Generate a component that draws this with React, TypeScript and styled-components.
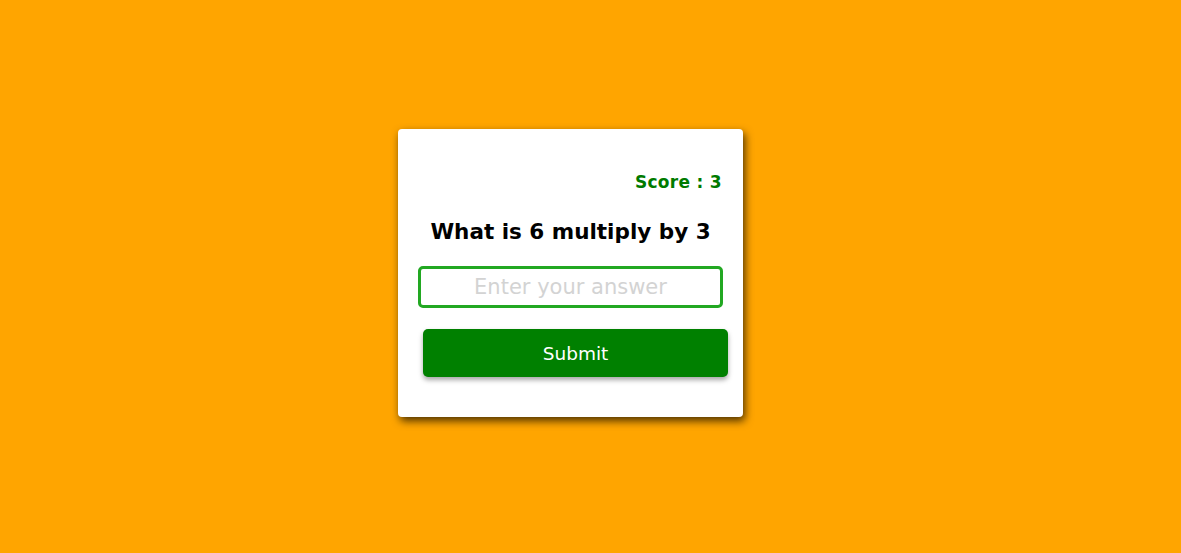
import styled, { createGlobalStyle } from "styled-components";

const GlobalStyle = createGlobalStyle`
  html, body {
    margin: 0;
    padding: 0;
    background: #ffa500;
  }

  * {
    box-sizing: border-box;
  }
`;

const Page = styled.div`
  height: 100vh;
  display: flex;
  align-items: center;
  justify-content: center;
  padding-right: 40px;
  padding-bottom: 7px;
  font-family: "Comic Sans MS", "Comic Sans", "DejaVu Sans", sans-serif;
`;

const Card = styled.div`
  width: 345px;
  height: 288px;
  background: #fff;
  border-radius: 4px;
  box-shadow: 2px 4px 8px rgba(0, 0, 0, 0.7);
  padding: 41px 20px 40px 20px;
  display: flex;
  flex-direction: column;
`;

const Score = styled.div`
  text-align: right;
  color: #007a00;
  font-weight: bold;
  font-size: 17px;
  line-height: 24px;
  letter-spacing: 0.3px;
  padding-right: 1px;
`;

const Question = styled.h2`
  margin: 23px 0 0 0;
  text-align: center;
  font-size: 21.5px;
  line-height: 30px;
  font-weight: bold;
  color: #000;
`;

const AnswerInput = styled.input`
  margin-top: 19px;
  width: 305px;
  height: 42px;
  border: 3px solid #22a822;
  border-radius: 5px;
  outline: none;
  text-align: center;
  font-family: inherit;
  font-size: 21px;
  color: #333;

  &::placeholder {
    color: #d3d3d3;
  }
`;

const SubmitButton = styled.button`
  margin: 21px 0 0 5px;
  width: 305px;
  height: 48px;
  border: none;
  border-radius: 5px;
  background: #008000;
  color: #fff;
  font-family: inherit;
  font-size: 18.5px;
  box-shadow: 0 3px 5px rgba(0, 0, 0, 0.35);
  cursor: pointer;
`;

const App = () => {
  return (
    <>
      <GlobalStyle />
      <Page>
        <Card>
          <Score>Score : 3</Score>
          <Question>What is 6 multiply by 3</Question>
          <AnswerInput placeholder="Enter your answer" />
          <SubmitButton>Submit</SubmitButton>
        </Card>
      </Page>
    </>
  );
};

export default App;
